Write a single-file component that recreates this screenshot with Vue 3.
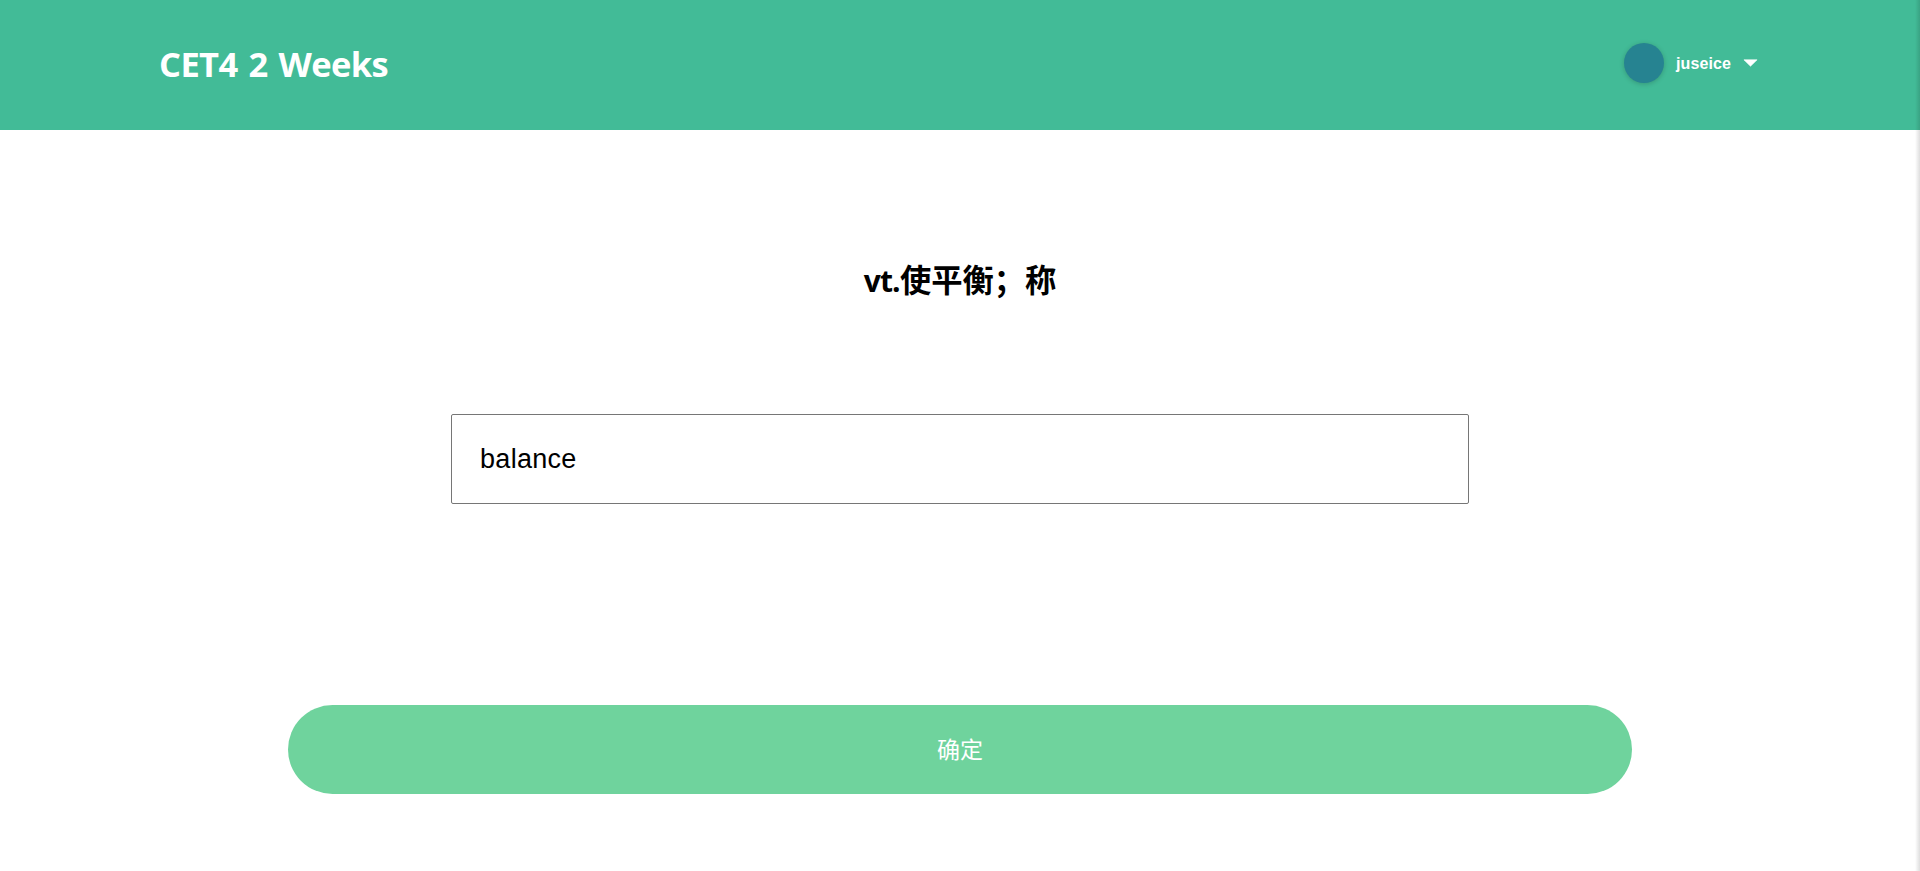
<!--
    spelling page
-->

<script setup>
    //------ imports ------
    import { ref } from 'vue';

    //------- data -------
    const userName = ref('juseice');
    const wordType = ref('vt.');
    const meaning = ref('使平衡；称');
    const answer = ref('balance');

    //------ methods ------
    const handleConfirm = () => {
        answer.value = answer.value.trim();
    };
</script>


<template>
    <div class="page">
        <header class="header">
            <h1 class="title">CET4 2 Weeks</h1>

            <div class="user">
                <span class="avatar"></span>
                <span class="user-name">{{ userName }}</span>
                <svg class="arrow" width="15" height="8" viewBox="0 0 15 8">
                    <path d="M0.9 0.8H14.1L7.5 7.2Z" fill="#fff" stroke="#fff" stroke-width="0.6" stroke-linejoin="round" />
                </svg>
            </div>
        </header>

        <form class="content" @submit.prevent="handleConfirm">
            <h2 class="meaning"><span class="word-type">{{ wordType }}</span>{{ meaning }}</h2>
            <input v-model="answer" class="answer" type="text">
            <button class="confirm-btn" type="submit">确定</button>
        </form>

        <!-- shadow of the closed side drawer -->
        <div class="drawer-edge"></div>
    </div>
</template>

<style>
    body {
        margin: 0;
        overflow: hidden;
    }
</style>

<style scoped>
    .page {
        position: relative;
        height: 100vh;
        overflow: hidden;
        background-color: #fff;
    }
    .header {
        display: flex;
        justify-content: space-between;
        align-items: center;
        box-sizing: border-box;
        height: 130px;
        padding: 0 162px 4px 159px;
        background-color: #42bb97;
        color: #fff;
    }
    .title {
        margin: 0;
        padding-top: 1px;
        font-family: "Open Sans", sans-serif;
        font-size: 34.5px;
        font-weight: bold;
        letter-spacing: -0.6px;
        word-spacing: 2.5px;
        line-height: 48px;
    }
    .user {
        display: flex;
        align-items: center;
        font-family: "Liberation Sans", Arial, sans-serif;
        font-size: 16px;
        font-weight: bold;
    }
    .avatar {
        width: 40px;
        height: 40px;
        margin-right: 12px;
        border-radius: 50%;
        background-color: #268391;
        box-shadow: 0 1px 5px rgba(0, 0, 0, 0.2);
    }
    .user-name {
        padding-top: 1px;
        letter-spacing: 0.1px;
    }
    .arrow {
        margin-left: 12px;
    }
    .content {
        display: flex;
        flex-direction: column;
        align-items: center;
    }
    .meaning {
        height: 48px;
        margin: 126px 0 0;
        font-family: "Open Sans", "Noto Sans CJK SC", sans-serif;
        font-size: 31.3px;
        font-weight: bold;
        line-height: 48px;
        color: #000;
    }
    .word-type {
        font-size: 30px;
        letter-spacing: -0.8px;
    }
    .answer {
        box-sizing: border-box;
        width: 1018px;
        height: 90px;
        margin-top: 110px;
        padding: 0 28px;
        border: 1px solid #767676;
        border-radius: 2px;
        outline: none;
        font-family: "Liberation Sans", Arial, sans-serif;
        font-size: 27px;
        letter-spacing: 0.3px;
        color: #000;
    }
    .confirm-btn {
        width: 70%;
        height: 89px;
        margin-top: 201px;
        padding: 0 0 4px;
        border: none;
        border-radius: 45px;
        background-color: #6fd39d;
        color: #fff;
        font-family: "Liberation Sans", "Noto Sans CJK SC", sans-serif;
        font-size: 23px;
        cursor: pointer;
    }
    .drawer-edge {
        position: absolute;
        top: 0;
        right: 0;
        width: 5px;
        height: 100%;
        background: linear-gradient(to right, rgba(0, 0, 0, 0), rgba(0, 0, 0, 0.13));
    }
</style>
